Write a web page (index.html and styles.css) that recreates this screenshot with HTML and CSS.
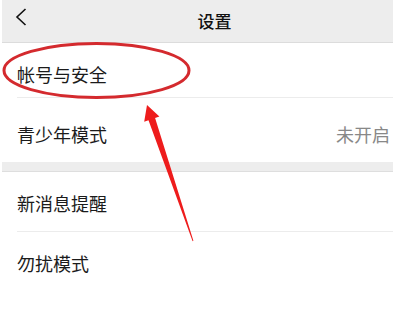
FILE: index.html
```html
<!DOCTYPE html>
<html lang="zh-CN">
<head>
<meta charset="utf-8">
<title>设置</title>
<link rel="stylesheet" href="styles.css">
</head>
<body>
<div class="page">
  <header class="topbar">
    <span class="back">
      <svg width="12" height="18" viewBox="0 0 12 18"><path d="M10.5 1 L2 9 L10.5 17" fill="none" stroke="#111" stroke-width="1.6"/></svg>
    </span>
    <h1 class="title">设置</h1>
  </header>
  <div class="group">
    <div class="row row-1"><span class="label">帐号与安全</span></div>
    <div class="row row-2"><span class="label">青少年模式</span><span class="value">未开启</span></div>
  </div>
  <div class="band"></div>
  <div class="group">
    <div class="row row-3"><span class="label">新消息提醒</span></div>
    <div class="row row-4"><span class="label">勿扰模式</span></div>
  </div>
</div>
<svg class="annot" width="398" height="315" viewBox="0 0 398 315">
  <ellipse cx="96.5" cy="70.5" rx="92.5" ry="27" fill="none" stroke="#d42a2e" stroke-width="3"/>
  <polygon points="147,105 159.4,116.6 155.1,118.1 193.4,240.8 192.6,241.2 148.5,120.3 144.2,121.8" fill="#ee1c1c"/>
</svg>
</body>
</html>
```
FILE: styles.css
```css
html, body {
  margin: 0;
  padding: 0;
  background: #fff;
}
body {
  position: relative;
  width: 398px;
  height: 315px;
  overflow: hidden;
  font-family: "Noto Sans CJK SC", "Noto Sans", sans-serif;
  color: #1b1b1b;
}
.page {
  margin-left: 2px;
  width: 391px;
}
.topbar {
  height: 42px;
  background: #ededed;
  border-bottom: 1px solid #dcdcdc;
  display: flex;
  align-items: center;
  justify-content: center;
  position: relative;
}
.back {
  position: absolute;
  left: 13px;
  top: 8px;
  display: flex;
}
.title {
  margin: 0 0 0 34px;
  font-size: 17px;
  font-weight: 500;
  line-height: 24px;
  color: #111;
}
.group {
  padding-left: 15px;
}
.row {
  display: flex;
  align-items: center;
  justify-content: space-between;
  box-sizing: border-box;
  padding-right: 3px;
}
.row-1 { height: 55px; padding-top: 8px; border-bottom: 1px solid #ececec; }
.row-2 { height: 64px; padding-top: 8px; }
.row-3 { height: 60px; padding-top: 2px; border-bottom: 1px solid #ececec; }
.row-4 { height: 60px; padding-top: 2px; }
.label {
  font-size: 18px;
  line-height: 26px;
  letter-spacing: 0;
}
.value {
  font-size: 18px;
  line-height: 26px;
  color: #888;
}
.band {
  height: 9px;
  background: #ededed;
  border-bottom: 1px solid #dedede;
}
.annot {
  position: absolute;
  left: 0;
  top: 0;
  pointer-events: none;
}
```
